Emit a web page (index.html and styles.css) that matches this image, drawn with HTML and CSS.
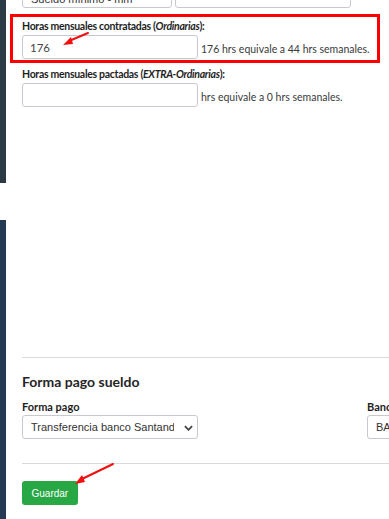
FILE: index.html
```html
<!DOCTYPE html>
<html lang="es">
<head>
  <meta charset="UTF-8" />
  <meta name="viewport" content="width=device-width, initial-scale=1.0"/>
  <title>Contrato - Horas y forma de pago</title>
  <link rel="stylesheet" href="styles.css">
</head>

<body>
  <div class="page">
    <!-- Left sidebar strip -->
    <div class="sidebar">
      <div class="sb-top"></div>
      <div class="sb-gap"></div>
      <div class="sb-bottom"></div>
    </div>

    <div class="content">
      <!-- Previous row (scrolled off the top) -->
      <div class="top-row">
        <div class="select-wrap narrow">
          <select class="field-select">
            <option>Sueldo mínimo - mm</option>
          </select>
          <svg class="chev" viewBox="0 0 10 6"><path d="M1 1l4 4 4-4" /></svg>
        </div>
        <div class="select-wrap">
          <select class="field-select">
            <option></option>
          </select>
          <svg class="chev" viewBox="0 0 10 6"><path d="M1 1l4 4 4-4" /></svg>
        </div>
      </div>

      <!-- Highlighted field -->
      <div class="highlight">
        <label class="lbl" for="horasOrd">Horas mensuales contratadas (<em>Ordinarias</em>):</label>
        <div class="input-row">
          <input class="field-input" id="horasOrd" type="text" value="176">
          <span class="help">176 hrs equivale a 44 hrs semanales.</span>
        </div>
      </div>

      <div class="group">
        <label class="lbl" for="horasExtra">Horas mensuales pactadas (<em>EXTRA-Ordinarias</em>):</label>
        <div class="input-row">
          <input class="field-input" id="horasExtra" type="text" value="">
          <span class="help">hrs equivale a 0 hrs semanales.</span>
        </div>
      </div>

      <hr class="sep first">

      <h3 class="section-title">Forma pago sueldo</h3>
      <div class="pay-row">
        <div class="pay-field">
          <label class="lbl short" for="formaPago">Forma pago</label>
          <div class="select-wrap">
            <select class="field-select big" id="formaPago">
              <option>Transferencia banco Santander</option>
            </select>
            <svg class="chev" viewBox="0 0 10 6"><path d="M1 1l4 4 4-4" /></svg>
          </div>
        </div>
        <div class="pay-field">
          <label class="lbl short" for="banco">Banco</label>
          <div class="select-wrap">
            <select class="field-select big" id="banco">
              <option>BANCO SANTANDER</option>
            </select>
          </div>
        </div>
      </div>

      <hr class="sep second">

      <button class="btn-save">Guardar</button>
    </div>

    <!-- Red annotation arrows -->
    <svg class="marks" width="389" height="519" viewBox="0 0 389 519">
      <line x1="88" y1="33" x2="69" y2="41" />
      <polygon points="63,45 71,37 73,44" />
      <line x1="113" y1="464" x2="82" y2="479" />
      <polygon points="75,484 82,475 85,482" />
    </svg>
  </div>
</body>
</html>
```

FILE: styles.css
```css
/* Basic Reset */
* {
  margin: 0;
  padding: 0;
  box-sizing: border-box;
}

body {
  background-color: #fff;
  font-family: Lato, "Open Sans", sans-serif;
  color: #212529;
  height: 519px;
  overflow: hidden;
}

.page {
  position: relative;
  display: flex;
  height: 519px;
}

/* SIDEBAR STRIP */
.sidebar {
  width: 6px;
  display: flex;
  flex-direction: column;
}
.sb-top {
  height: 183px;
  background-color: #2c3a46;
}
.sb-gap {
  height: 37px;
}
.sb-bottom {
  flex: 1;
  background-color: #243a52;
}

/* CONTENT */
.content {
  flex: 1;
  padding-left: 16px;
  overflow: hidden;
}

.top-row {
  display: flex;
  gap: 3px;
  margin-top: -20px;
}
.top-row .select-wrap {
  width: 176px;
}
.top-row .select-wrap.narrow {
  width: 150px;
}
.top-row .field-select {
  height: 28px;
  padding-top: 9px;
}
.top-row .chev {
  top: 12px;
}

.select-wrap {
  position: relative;
  width: 176px;
}

.field-select {
  appearance: none;
  width: 100%;
  height: 24px;
  border: 1px solid #c9c8d0;
  border-radius: 3px;
  background-color: #fff;
  font-family: "Liberation Sans", Arial, sans-serif;
  font-size: 11px;
  color: #333;
  padding: 0 22px 0 8px;
}
.field-select.big {
  padding-right: 23px;
}

.chev {
  position: absolute;
  right: 5px;
  top: 10px;
  width: 9px;
  height: 6px;
  fill: none;
  stroke: #444;
  stroke-width: 2;
}

/* RED HIGHLIGHT BOX */
.highlight {
  margin-top: 6px;
  margin-left: -12px;
  width: 370px;
  border: 3px solid #f00;
  padding: 2px 0 1px 9px;
}

.group {
  margin-top: 4px;
}

.lbl {
  display: block;
  font-size: 10.5px;
  letter-spacing: -0.3px;
  line-height: 15px;
  font-weight: 700;
  color: #1e1e1e;
}
.lbl.short {
  font-size: 11px;
  letter-spacing: 0;
}
.lbl em {
  font-style: italic;
}

.input-row {
  display: flex;
  align-items: flex-end;
  margin-top: 1px;
}

.field-input {
  width: 176px;
  height: 24px;
  border: 1px solid #c9c8d0;
  border-radius: 3px;
  padding: 0 7px;
  font-family: Lato, sans-serif;
  font-size: 11.5px;
  color: #444;
}

.help {
  margin-left: 3px;
  margin-bottom: 2px;
  font-size: 10.5px;
  line-height: 15px;
  color: #3a3a3a;
  white-space: nowrap;
}

/* SEPARATORS */
.sep {
  border: none;
  border-top: 1px solid #d9d9d9;
  margin-right: -40px;
}
.sep.first {
  margin-top: 250px;
}
.sep.second {
  margin-top: 24px;
}

/* PAYMENT SECTION */
.section-title {
  margin-top: 15px;
  font-size: 14px;
  line-height: 18px;
  font-weight: 700;
  color: #262626;
}

.pay-row {
  display: flex;
  gap: 169px;
  margin-top: 8px;
  white-space: nowrap;
}

.pay-field {
  flex: none;
  width: 176px;
}
.pay-field .select-wrap {
  margin-top: 1px;
}

/* SAVE BUTTON */
.btn-save {
  margin-top: 17px;
  height: 24px;
  padding: 0 9.5px;
  background-color: #28a745;
  border: none;
  border-radius: 3px;
  color: #fff;
  font-family: "Liberation Sans", Arial, sans-serif;
  font-size: 10px;
  cursor: pointer;
}
.btn-save:hover {
  background-color: #218838;
}

/* ANNOTATIONS */
.marks {
  position: absolute;
  top: 0;
  left: 0;
  pointer-events: none;
}
.marks line {
  stroke: #f01010;
  stroke-width: 2;
  stroke-linecap: round;
}
.marks polygon {
  fill: #f01010;
}
```
